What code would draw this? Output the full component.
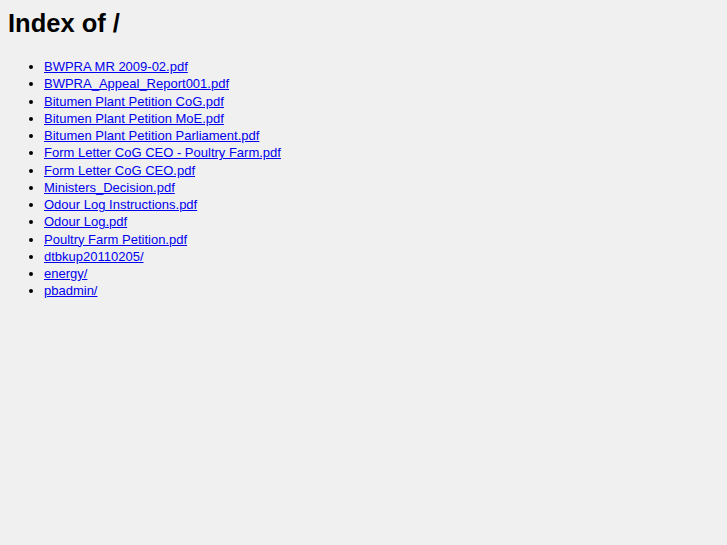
const files = [
  "BWPRA MR 2009-02.pdf",
  "BWPRA_Appeal_Report001.pdf",
  "Bitumen Plant Petition CoG.pdf",
  "Bitumen Plant Petition MoE.pdf",
  "Bitumen Plant Petition Parliament.pdf",
  "Form Letter CoG CEO - Poultry Farm.pdf",
  "Form Letter CoG CEO.pdf",
  "Ministers_Decision.pdf",
  "Odour Log Instructions.pdf",
  "Odour Log.pdf",
  "Poultry Farm Petition.pdf",
  "dtbkup20110205/",
  "energy/",
  "pbadmin/",
];

export default function App() {
  return (
    <div className="min-h-[545px] bg-[#f0f0f0] px-[8px] pt-[9px] font-['Liberation_Sans',Arial,sans-serif] text-black">
      <h1 className="text-[25.5px] font-bold leading-[29px]">Index of /</h1>
      <ul className="mt-[20px] list-disc pl-[36px] text-[13px] leading-[17.25px]">
        {files.map((f) => (
          <li key={f}>
            <a href={"/" + f} className="text-[#0000ee] underline">
              {f}
            </a>
          </li>
        ))}
      </ul>
    </div>
  );
}
